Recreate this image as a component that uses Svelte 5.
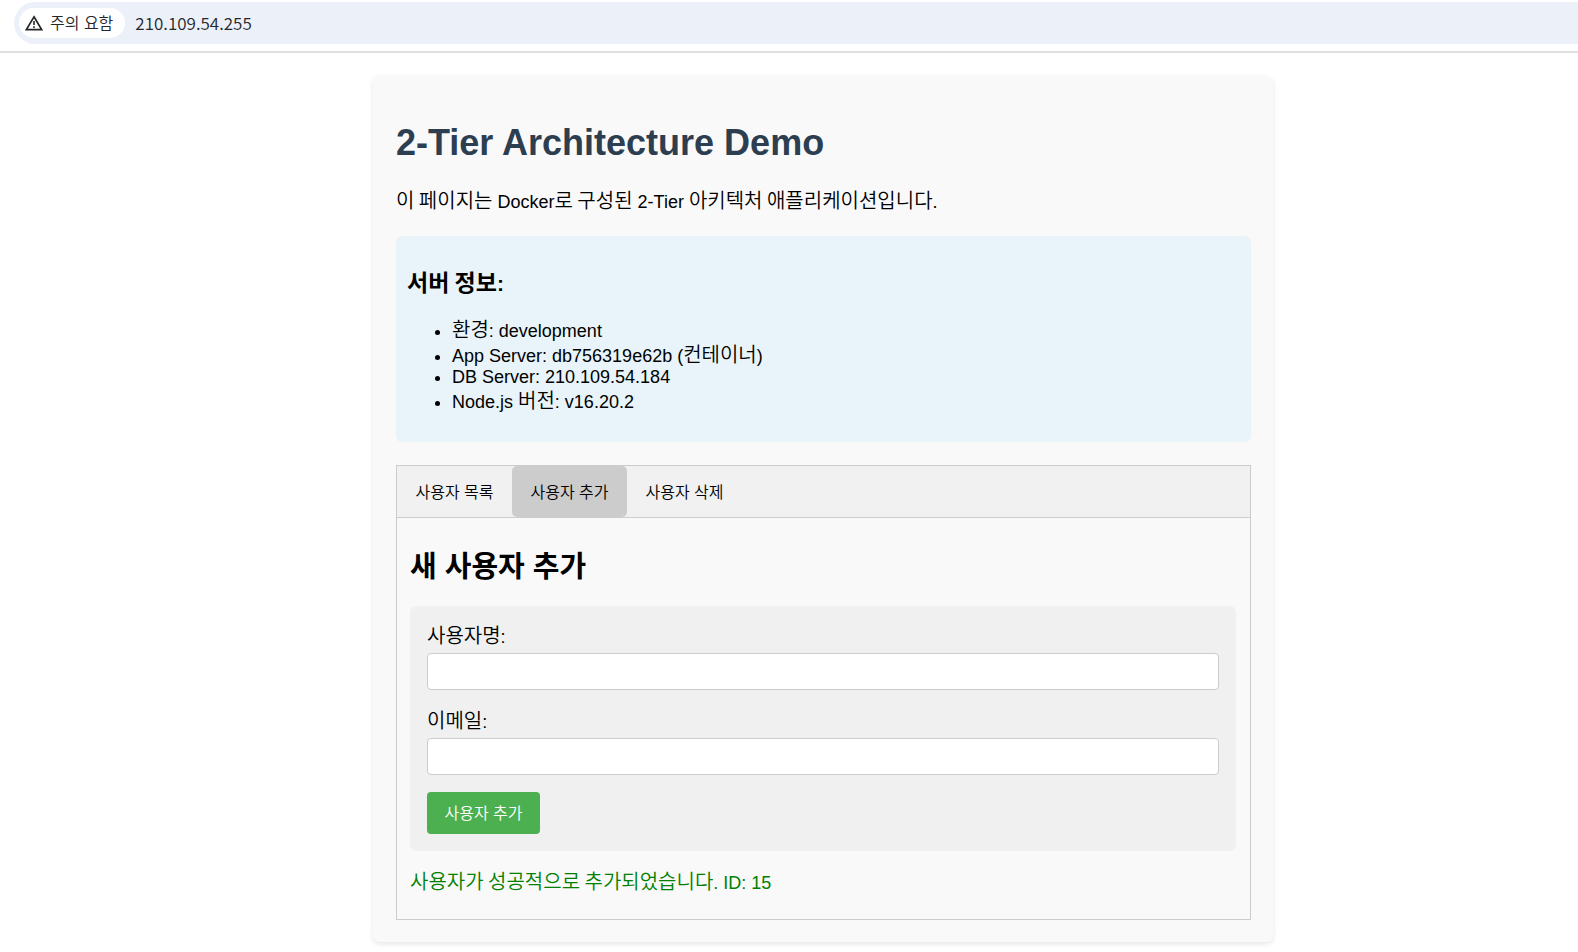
<script>
  const tabs = [
    { id: 'list', label: '사용자 목록' },
    { id: 'add', label: '사용자 추가' },
    { id: 'delete', label: '사용자 삭제' }
  ];
  let active = $state('add');
  let username = $state('');
  let email = $state('');
</script>

<header class="browser-bar">
  <div class="address">
    <button class="security" type="button">
      <svg viewBox="0 0 18 16" width="18" height="16" aria-hidden="true">
        <path d="M9 1.8 16.6 14.6H1.4Z" fill="none" stroke="#25272a" stroke-width="1.7" />
        <path d="M9 6v4M9 11.2v1.7" fill="none" stroke="#25272a" stroke-width="1.6" />
      </svg>
      <span>주의 요함</span>
    </button>
    <span class="url">210.109.54.255</span>
  </div>
</header>

<main>
  <div class="card">
    <h1>2-Tier Architecture Demo</h1>
    <p class="intro"><span class="ko">이 페이지는</span> Docker<span class="ko">로 구성된</span> 2-Tier <span class="ko">아키텍처 애플리케이션입니다</span>.</p>

    <section class="info">
      <h3><span class="ko">서버 정보</span>:</h3>
      <ul>
        <li class="mixed"><span class="ko">환경</span>: development</li>
        <li class="mixed">App Server: db756319e62b (<span class="ko">컨테이너</span>)</li>
        <li>DB Server: 210.109.54.184</li>
        <li class="mixed">Node.js <span class="ko">버전</span>: v16.20.2</li>
      </ul>
    </section>

    <nav class="tabs">
      {#each tabs as tab (tab.id)}
        <button type="button" class="tab" class:active={active === tab.id} onclick={() => (active = tab.id)}>{tab.label}</button>
      {/each}
    </nav>

    <section class="panel">
      <h2>새 사용자 추가</h2>
      <form onsubmit={(e) => e.preventDefault()}>
        <div class="field">
          <label for="username"><span class="ko">사용자명</span>:</label>
          <input id="username" type="text" bind:value={username} />
        </div>
        <div class="field">
          <label for="email"><span class="ko">이메일</span>:</label>
          <input id="email" type="email" bind:value={email} />
        </div>
        <button class="submit" type="submit">사용자 추가</button>
      </form>
      <p class="message"><span class="ko">사용자가 성공적으로 추가되었습니다</span>. ID: 15</p>
    </section>
  </div>
</main>

<style>
  :global(body) {
    background: #fff;
    color: #000;
    font: 18px/21px "Liberation Sans", "Noto Sans CJK KR", sans-serif;
  }
  h1, h2, h3, p, ul { margin: 0; }
  button, input { font-family: "Liberation Sans", "Noto Sans CJK KR", sans-serif; }
  button {
    font-weight: 350;
    cursor: pointer;
  }

  .ko {
    font-family: "Noto Sans CJK KR", sans-serif;
    font-size: 20px;
    font-weight: 350;
    line-height: 0;
  }

  .browser-bar {
    padding: 2px 0 7px 14px;
    border-bottom: 2px solid #e0e0e0;
  }
  .address {
    display: flex;
    align-items: center;
    gap: 10px;
    height: 42px;
    padding-left: 5px;
    border-radius: 21px 0 0 21px;
    background: #ecf0f9;
  }
  .security {
    display: flex;
    align-items: center;
    gap: 7px;
    height: 30px;
    padding: 0 12px 0 6px;
    border: 0;
    border-radius: 15px;
    background: #fff;
    color: #25272a;
    font-size: 16px;
  }
  .security span { padding-bottom: 3px; }
  .url {
    padding-bottom: 2px;
    color: #25272a;
    font-family: "Noto Sans CJK KR", sans-serif;
    font-size: 17px;
    font-weight: 350;
  }

  main { padding: 23px 0 10px 68px; }
  .card {
    box-sizing: border-box;
    max-width: 900px;
    margin: 0 auto;
    padding: 23px 22px 22px 23px;
    border-radius: 6px;
    background: #f9f9f9;
    box-shadow: 0 2px 5px rgba(0, 0, 0, 0.1);
  }
  h1 {
    margin: 23px 0 28px;
    color: #2c3e50;
    font-size: 36px;
    line-height: 42px;
  }
  .info {
    margin: 23px 0;
    padding: 36px 11px 29px;
    border-radius: 6px;
    background: #e8f4f9;
  }
  h3 {
    margin-bottom: 21px;
    font-size: 21px;
    line-height: 24px;
  }
  h3 .ko {
    font-size: 23px;
    font-weight: 700;
  }
  ul { padding-left: 45px; }
  .mixed { padding-top: 4px; }

  .tabs {
    display: flex;
    border: 1px solid #ccc;
    background: #f1f1f1;
  }
  .tab {
    min-width: 115px;
    height: 51px;
    padding: 0 18px 2px;
    border: 0;
    border-radius: 5px;
    background: transparent;
    color: #000;
    font-size: 16px;
  }
  .tab.active { background: #ccc; }

  .panel {
    padding: 32px 14px 25px 13px;
    border: 1px solid #ccc;
    border-top: 0;
  }
  h2 {
    margin-bottom: 22px;
    font-size: 29px;
    line-height: 34px;
  }
  form {
    padding: 16px 17px 17px;
    border-radius: 6px;
    background: #f0f0f0;
  }
  .field { margin-bottom: 17px; }
  label {
    display: block;
    margin-bottom: 4px;
    padding-top: 4px;
    line-height: 23px;
  }
  input {
    display: block;
    box-sizing: border-box;
    width: 100%;
    height: 37px;
    padding: 0 9px;
    border: 1px solid #ccc;
    border-radius: 4px;
    background: #fff;
    font-size: 16px;
  }
  .submit {
    display: block;
    min-width: 113px;
    height: 42px;
    padding: 0 17px 2px;
    border: 0;
    border-radius: 4px;
    background: #4caf50;
    color: #fff;
    font-size: 16px;
  }
  .message {
    margin-top: 22px;
    color: green;
  }
</style>
